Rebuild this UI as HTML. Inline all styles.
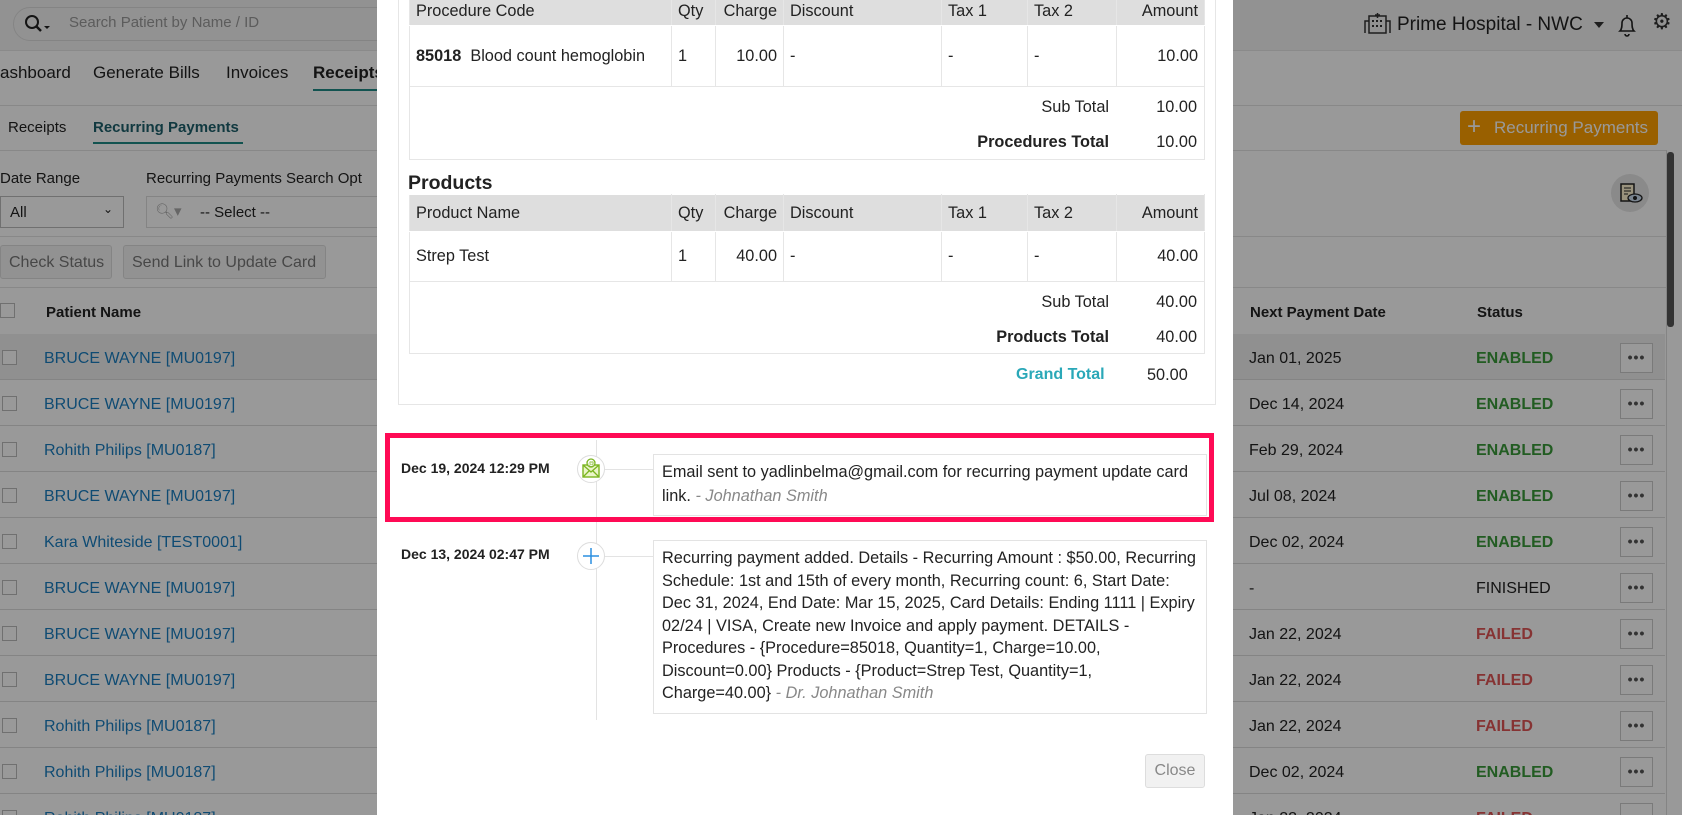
<!DOCTYPE html>
<html><head><meta charset="utf-8"><style>
*{box-sizing:border-box;margin:0;padding:0}
html,body{width:1682px;height:815px;overflow:hidden}
body{position:relative;font-family:"Liberation Sans",sans-serif;color:#222;background:#fff;font-size:15px}
.a{position:absolute;white-space:nowrap}
.ov{position:absolute;left:0;top:0;width:1682px;height:815px;background:rgba(0,0,0,0.4)}
.rows{position:absolute;left:0;top:0;width:1682px;height:815px;overflow:hidden}
.row{position:absolute;left:0;width:1665px;height:46px;border-bottom:1px solid #ddd}
.cb{position:absolute;left:2px;top:16px;width:15px;height:15px;border:1px solid #bbb;background:#fff}
.nm{position:absolute;left:44px;top:16px;color:#1a7ec0;font-size:16px}
.dt{position:absolute;left:1249px;top:16px;font-size:16px}
.st{position:absolute;left:1476px;top:16px;font-size:16px;font-weight:bold}
.dots{position:absolute;left:1620px;top:9px;width:33px;height:30px;border:1px solid #ccc;background:#fff;text-align:center;font-size:14px;line-height:26px;font-weight:bold;color:#555;letter-spacing:1px}
.en{color:#3a9a3a}.fa{color:#e05555}.fi{color:#222;font-weight:normal}
.modal{position:absolute;left:377px;top:0;width:856px;height:815px;background:#fff}
table{border-collapse:collapse;position:absolute;left:409px;width:796px;font-size:16.3px}
td,th{border:1px solid #e6e6e6;padding:0 6px;font-weight:normal;text-align:left}
th{background:#dedede;border-color:#fff #e6e6e6}
.r{text-align:right}
.card{position:absolute;left:653px;width:554px;border:1px solid #e3e3e3;padding:6px 8px;font-size:16.3px;line-height:23.5px;background:#fff;white-space:normal}
.au{color:#888;font-style:italic}
.ic{position:absolute;left:577px;width:28px;height:28px;border-radius:50%;border:1px solid #ddd;background:#fff}
</style></head><body>
<div class="a" style="left:0;top:0;width:1682px;height:51px;background:#f4f4f4;border-bottom:1px solid #e6e6e6"></div>
<div class="a" style="left:13px;top:7px;width:400px;height:34px;border:1px solid #ddd;border-radius:17px;background:#f4f4f4"></div>
<svg class="a" style="left:22px;top:13px" width="30" height="22"><circle cx="10" cy="9" r="6" fill="none" stroke="#222" stroke-width="2"/><line x1="14" y1="13" x2="19" y2="18" stroke="#222" stroke-width="2.5"/><path d="M22 13l3 3 3-3z" fill="#222"/></svg>
<div class="a" style="left:69px;top:14px;color:#999;font-size:15px">Search Patient by Name / ID</div>
<svg class="a" style="left:1364px;top:11px" width="28" height="24"><g fill="none" stroke="#333" stroke-width="1.5"><rect x="5" y="5" width="17" height="17"/><path d="M1 22V10h4M26 22V10h-4M11 4h5M13.5 2v5"/></g><g fill="#333"><rect x="8" y="9" width="2" height="2"/><rect x="12" y="9" width="2" height="2"/><rect x="16" y="9" width="2" height="2"/><rect x="8" y="14" width="2" height="2"/><rect x="12" y="14" width="2" height="2"/><rect x="16" y="14" width="2" height="2"/></g></svg>
<div class="a" style="left:1397px;top:14px;font-size:19px;color:#222">Prime Hospital - NWC</div>
<div class="a" style="left:1594px;top:22px;width:0;height:0;border:5px solid transparent;border-top:6px solid #333"></div>
<svg class="a" style="left:1616px;top:12px" width="22" height="26"><path d="M4 19c2-2 2-5 2-8a5 5 0 0110 0c0 3 0 6 2 8z M9 22a2 2 0 004 0 M11 3v3" fill="none" stroke="#222" stroke-width="1.6"/></svg>
<div class="a" style="left:1652px;top:9px;font-size:22px;color:#333">⚙</div>
<div class="a" style="left:0;top:63px;font-size:17px">ashboard</div>
<div class="a" style="left:93px;top:63px;font-size:17px">Generate Bills</div>
<div class="a" style="left:226px;top:63px;font-size:17px">Invoices</div>
<div class="a" style="left:313px;top:63px;font-size:17px;font-weight:bold">Receipts</div>
<div class="a" style="left:313px;top:89px;width:70px;height:2px;background:#1e8a85"></div>
<div class="a" style="left:0;top:105px;width:1682px;height:1px;background:#e3e3e3"></div>
<div class="a" style="left:8px;top:119px;font-size:15px">Receipts</div>
<div class="a" style="left:93px;top:119px;font-size:15px;font-weight:bold;color:#1d5f6b">Recurring Payments</div>
<div class="a" style="left:93px;top:142px;width:150px;height:2px;background:#1e8a85"></div>
<div class="a" style="left:0;top:150px;width:1666px;height:1px;background:#e3e3e3"></div>
<div class="a" style="left:1460px;top:111px;width:198px;height:34px;background:#ffa100;border-radius:3px"></div>
<div class="a" style="left:1467px;top:113px;font-size:24px;color:#fff">+</div>
<div class="a" style="left:1494px;top:118px;font-size:17px;color:#fff">Recurring Payments</div>
<div class="a" style="left:0;top:170px;font-size:15px">Date Range</div>
<div class="a" style="left:146px;top:170px;font-size:15px">Recurring Payments Search Opt</div>
<div class="a" style="left:0;top:196px;width:124px;height:32px;border:1px solid #bbb;background:#fff;padding:7px 9px;font-size:15px">All<span style="position:absolute;right:10px;top:5px;font-size:12px">⌄</span></div>
<div class="a" style="left:146px;top:196px;width:240px;height:32px;border:1px solid #ddd;background:#fff"></div>
<div class="a" style="left:155px;top:202px;color:#aaa;font-size:15px">🔍︎▾</div>
<div class="a" style="left:200px;top:204px;font-size:15px">-- Select --</div>
<div class="a" style="left:1611px;top:174px;width:38px;height:38px;border-radius:50%;background:#e6e6e6"></div>
<svg class="a" style="left:1618px;top:182px" width="26" height="24"><rect x="3" y="2" width="13" height="17" fill="#fff3d0" stroke="#222" stroke-width="1.5"/><path d="M6 6h7M6 9h7M6 12h4" stroke="#222"/><ellipse cx="17" cy="16" rx="7" ry="4" fill="#cde" stroke="#222" stroke-width="1.3"/><circle cx="17" cy="16" r="2" fill="#222"/></svg>
<div class="a" style="left:0;top:236px;width:1666px;height:1px;background:#e3e3e3"></div>
<div class="a" style="left:0;top:245px;width:112px;height:34px;border:1px solid #ddd;background:#f4f4f4;border-radius:3px;color:#777;font-size:16px;padding:8px 8px">Check Status</div>
<div class="a" style="left:123px;top:245px;width:203px;height:34px;border:1px solid #ddd;background:#f4f4f4;border-radius:3px;color:#777;font-size:16px;padding:8px 8px">Send Link to Update Card</div>
<div class="a" style="left:0;top:287px;width:1666px;height:1px;background:#e3e3e3"></div>
<div class="cb" style="top:303px;left:0"></div>
<div class="a" style="left:46px;top:304px;font-weight:bold;font-size:15px">Patient Name</div>
<div class="a" style="left:1250px;top:304px;font-weight:bold;font-size:15px">Next Payment Date</div>
<div class="a" style="left:1477px;top:304px;font-weight:bold;font-size:15px">Status</div>
<div class="a" style="left:0;top:334px;width:1665px;height:1px;background:#ddd"></div>
<div class="rows">
<div class="row" style="top:334px;background:#f0f0f0"><div class="cb"></div><div class="nm">BRUCE WAYNE [MU0197]</div><div class="dt">Jan 01, 2025</div><div class="st en">ENABLED</div><div class="dots">•••</div></div>
<div class="row" style="top:380px"><div class="cb"></div><div class="nm">BRUCE WAYNE [MU0197]</div><div class="dt">Dec 14, 2024</div><div class="st en">ENABLED</div><div class="dots">•••</div></div>
<div class="row" style="top:426px"><div class="cb"></div><div class="nm">Rohith Philips [MU0187]</div><div class="dt">Feb 29, 2024</div><div class="st en">ENABLED</div><div class="dots">•••</div></div>
<div class="row" style="top:472px"><div class="cb"></div><div class="nm">BRUCE WAYNE [MU0197]</div><div class="dt">Jul 08, 2024</div><div class="st en">ENABLED</div><div class="dots">•••</div></div>
<div class="row" style="top:518px"><div class="cb"></div><div class="nm">Kara Whiteside [TEST0001]</div><div class="dt">Dec 02, 2024</div><div class="st en">ENABLED</div><div class="dots">•••</div></div>
<div class="row" style="top:564px"><div class="cb"></div><div class="nm">BRUCE WAYNE [MU0197]</div><div class="dt">-</div><div class="st fi">FINISHED</div><div class="dots">•••</div></div>
<div class="row" style="top:610px"><div class="cb"></div><div class="nm">BRUCE WAYNE [MU0197]</div><div class="dt">Jan 22, 2024</div><div class="st fa">FAILED</div><div class="dots">•••</div></div>
<div class="row" style="top:656px"><div class="cb"></div><div class="nm">BRUCE WAYNE [MU0197]</div><div class="dt">Jan 22, 2024</div><div class="st fa">FAILED</div><div class="dots">•••</div></div>
<div class="row" style="top:702px"><div class="cb"></div><div class="nm">Rohith Philips [MU0187]</div><div class="dt">Jan 22, 2024</div><div class="st fa">FAILED</div><div class="dots">•••</div></div>
<div class="row" style="top:748px"><div class="cb"></div><div class="nm">Rohith Philips [MU0187]</div><div class="dt">Dec 02, 2024</div><div class="st en">ENABLED</div><div class="dots">•••</div></div>
<div class="row" style="top:794px"><div class="cb"></div><div class="nm">Rohith Philips [MU0187]</div><div class="dt">Jan 22, 2024</div><div class="st fa">FAILED</div><div class="dots">•••</div></div>
</div>
<div class="a" style="left:1666px;top:150px;width:1px;height:665px;background:#ddd"></div>
<div class="a" style="left:1667px;top:152px;width:7px;height:175px;background:#555;border-radius:3px"></div>
<div class="ov"></div>
<div class="modal"></div>
<div class="a" style="left:398px;top:0;width:818px;height:405px;border:1px solid #e6e6e6;border-top:none"></div>
<table style="top:-4px">
<tr style="height:29px"><th>Procedure Code</th><th>Qty</th><th class="r">Charge</th><th>Discount</th><th>Tax 1</th><th>Tax 2</th><th class="r">Amount</th></tr>
<tr style="height:61px"><td style="width:262px"><b>85018</b>&nbsp;&nbsp;Blood count hemoglobin</td><td style="width:44px">1</td><td class="r" style="width:68px">10.00</td><td style="width:158px">-</td><td style="width:86px">-</td><td style="width:89px">-</td><td class="r">10.00</td></tr>
<tr style="height:73px"><td colspan="7" style="padding:0;position:relative"><div class="a" style="right:95px;top:11px">Sub Total</div><div class="a" style="right:7px;top:11px">10.00</div><div class="a" style="right:95px;top:46px;font-weight:bold">Procedures Total</div><div class="a" style="right:7px;top:46px">10.00</div></td></tr>
</table>
<div class="a" style="left:408px;top:172px;font-size:19.5px;font-weight:bold">Products</div>
<table style="top:194px">
<tr style="height:37px"><th>Product Name</th><th>Qty</th><th class="r">Charge</th><th>Discount</th><th>Tax 1</th><th>Tax 2</th><th class="r">Amount</th></tr>
<tr style="height:50px"><td style="width:262px">Strep Test</td><td style="width:44px">1</td><td class="r" style="width:68px">40.00</td><td style="width:158px">-</td><td style="width:86px">-</td><td style="width:89px">-</td><td class="r">40.00</td></tr>
<tr style="height:72px"><td colspan="7" style="padding:0;position:relative"><div class="a" style="right:95px;top:11px">Sub Total</div><div class="a" style="right:7px;top:11px">40.00</div><div class="a" style="right:95px;top:46px;font-weight:bold">Products Total</div><div class="a" style="right:7px;top:46px">40.00</div></td></tr>
</table>
<div class="a" style="left:1016px;top:366px;font-weight:bold;color:#2aa8b8;font-size:16px">Grand Total</div>
<div class="a" style="left:1147px;top:366px;font-size:16.3px">50.00</div>
<div class="a" style="left:596px;top:440px;width:1px;height:280px;background:#e3e3e3"></div>
<div class="a" style="left:605px;top:469px;width:48px;height:1px;background:#e3e3e3"></div>
<div class="a" style="left:605px;top:556px;width:48px;height:1px;background:#e3e3e3"></div>
<div class="a" style="left:401px;top:460px;font-size:14px;font-weight:bold">Dec 19, 2024 12:29 PM</div>
<div class="ic" style="top:455px"></div>
<svg class="a" style="left:581px;top:457px" width="20" height="22"><rect x="2" y="8" width="16" height="12" fill="#eaf5c8" stroke="#7ab520" stroke-width="1.4"/><path d="M2 8l8 7 8-7M2 20l6-6M18 20l-6-6" fill="none" stroke="#7ab520" stroke-width="1.3"/><circle cx="10" cy="6" r="4" fill="#fff" stroke="#7ab520" stroke-width="1.3"/><text x="7.3" y="8.5" font-size="6" fill="#7ab520" font-family="Liberation Sans">@</text></svg>
<div class="card" style="top:454px;height:62px">Email sent to yadlinbelma@gmail.com for recurring payment update card link. <span class="au">- Johnathan Smith</span></div>
<div class="a" style="left:385px;top:433px;width:829px;height:89px;border:5px solid #ff0a55"></div>
<div class="a" style="left:401px;top:546px;font-size:14px;font-weight:bold">Dec 13, 2024 02:47 PM</div>
<div class="ic" style="top:542px"></div>
<svg class="a" style="left:582px;top:547px" width="18" height="18"><path d="M9 1v16M1 9h16" stroke="#2b8fe0" stroke-width="1.5"/></svg>
<div class="card" style="top:540px;height:174px;line-height:22.5px">Recurring payment added. Details - Recurring Amount : $50.00, Recurring Schedule: 1st and 15th of every month, Recurring count: 6, Start Date: Dec 31, 2024, End Date: Mar 15, 2025, Card Details: Ending 1111 | Expiry 02/24 | VISA, Create new Invoice and apply payment. DETAILS - Procedures - {Procedure=85018, Quantity=1, Charge=10.00, Discount=0.00} Products - {Product=Strep Test, Quantity=1, Charge=40.00} <span class="au">- Dr. Johnathan Smith</span></div>
<div class="a" style="left:1145px;top:754px;width:60px;height:34px;border:1px solid #ddd;border-radius:3px;background:#f1f1f1;color:#888;font-size:16px;text-align:center;line-height:32px">Close</div>
</body></html>
